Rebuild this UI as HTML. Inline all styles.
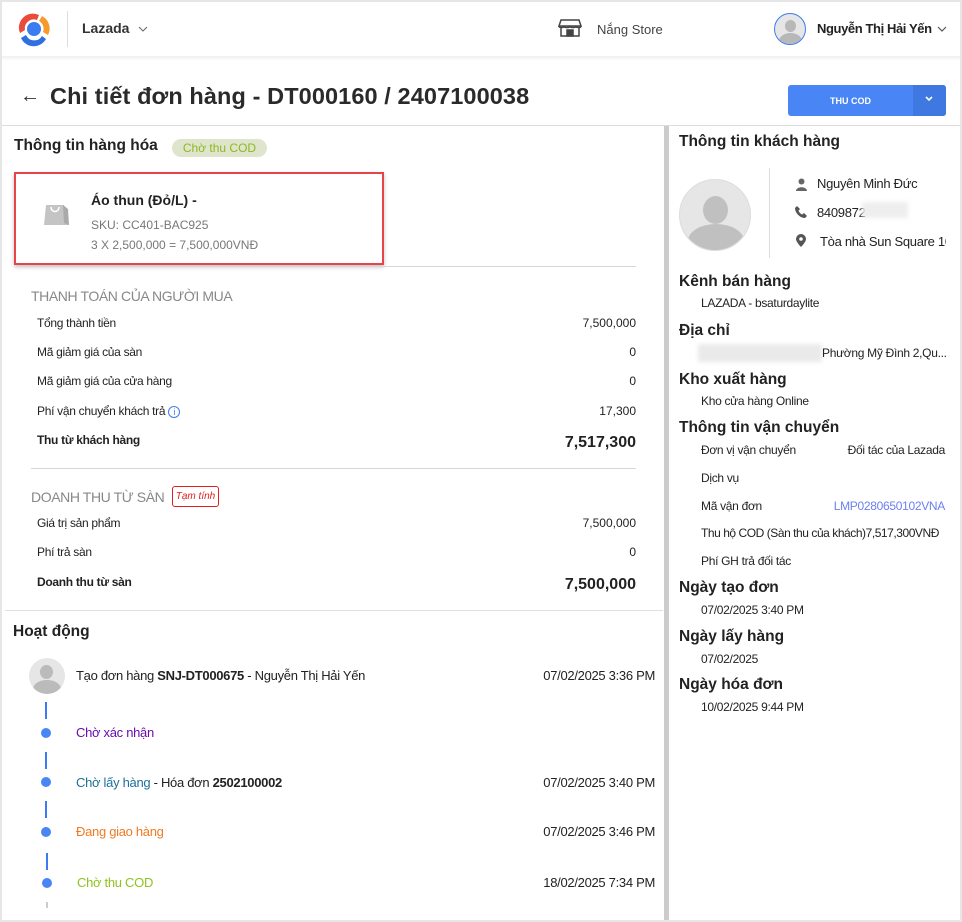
<!DOCTYPE html>
<html><head><meta charset="utf-8"><style>
*{margin:0;padding:0;box-sizing:border-box}
body{width:962px;height:922px;overflow:hidden;background:#fff;font-family:"Liberation Sans",sans-serif;color:#222;position:relative}
.a{position:absolute;white-space:nowrap}
.frame{position:absolute;left:0;top:0;width:962px;height:922px;border:2px solid #e6e6e6;pointer-events:none}
.s12{font-size:12px}
.h16{font-size:16px;font-weight:bold;color:#222}
.r{text-align:right}
.rc .s12{letter-spacing:-0.3px}
.tl{letter-spacing:-0.3px}
</style></head><body>
<!-- header -->
<div class="a" style="left:0;top:0;width:962px;height:56px;background:#fff;box-shadow:0 2px 4px rgba(0,0,0,.08)"></div>
<svg class="a" style="left:15px;top:11px" width="38" height="36" viewBox="0 0 38 36">
<circle cx="19" cy="18" r="7" fill="#3b7cf0"/>
<path d="M5 22 A14 14 0 0 1 24 4 L22 9 A9 9 0 0 0 10 19 Z" fill="#e94b3c"/>
<path d="M27 5 A14 14 0 0 1 33 24 L28 21 A9 9 0 0 0 24 10 Z" fill="#f59b2b"/>
<path d="M31 28 A14 14 0 0 1 6 27 L11 24 A9 9 0 0 0 27 25 Z" fill="#2f6fe0"/>
</svg>
<div class="a" style="left:67px;top:11px;width:1px;height:36px;background:#ddd"></div>
<div class="a" style="left:82px;top:20px;font-size:14px;font-weight:bold;color:#333">Lazada</div>
<svg class="a" style="left:138px;top:26px" width="10" height="6"><path d="M1 1l4 4 4-4" stroke="#666" stroke-width="1" fill="none"/></svg>
<svg class="a" style="left:558px;top:19px" width="24" height="18" viewBox="0 0 24 18" fill="none" stroke="#444" stroke-width="1.5"><path d="M3 1h18l2 6H1z"/><path d="M1 7c0 2 5 2 5 0 0 2 6 2 6 0 0 2 6 2 6 0 0 2 5 2 5 0M3 9v8h18V9"/><rect x="9" y="11" width="6" height="6" fill="#444"/></svg>
<div class="a" style="left:597px;top:22px;font-size:13px;color:#444">Nắng Store</div>
<div class="a" style="left:774px;top:13px;width:32px;height:32px;border-radius:50%;border:1px solid #3b7cf0;background:#e6e6e6;overflow:hidden"><div style="position:absolute;left:10px;top:6px;width:11px;height:12px;border-radius:50%;background:#b8b8b8"></div><div style="position:absolute;left:4px;top:19px;width:23px;height:16px;border-radius:50% 50% 0 0;background:#b8b8b8"></div></div>
<div class="a" style="left:817px;top:21px;font-size:13px;font-weight:bold;color:#222;letter-spacing:-0.4px">Nguyễn Thị Hải Yến</div>
<svg class="a" style="left:937px;top:26px" width="10" height="6"><path d="M1 1l4 4 4-4" stroke="#555" stroke-width="1.2" fill="none"/></svg>
<!-- title -->
<div class="a" style="left:20px;top:85px;font-size:20px;color:#333">←</div>
<div class="a" style="left:50px;top:83px;font-size:23.5px;font-weight:bold;color:#2a2a2a;letter-spacing:0.1px">Chi tiết đơn hàng - DT000160 / 2407100038</div>
<div class="a" style="left:788px;top:85px;width:158px;height:31px;background:#4a85f5;border-radius:3px"></div>
<div class="a" style="left:913px;top:85px;width:33px;height:31px;background:#3f78e0;border-radius:0 3px 3px 0"></div>
<div class="a" style="left:830px;top:96px;font-size:9px;font-weight:bold;color:#fff">THU COD</div>
<svg class="a" style="left:924px;top:95px" width="10" height="8"><path d="M2 2l3 3 3-3" stroke="#fff" stroke-width="1.6" fill="none"/></svg>
<div class="a" style="left:2px;top:125px;width:958px;height:1px;background:#ddd"></div>
<div class="a" style="left:664px;top:126px;width:5px;height:794px;background:#ccc"></div>
<!-- left -->
<div class="a h16" style="left:14px;top:137px;font-size:15.5px">Thông tin hàng hóa</div>
<div class="a" style="left:172px;top:139px;width:95px;height:18px;border-radius:9px;background:#dfe5cc;color:#8fb821;font-size:12px;text-align:center;line-height:18px">Chờ thu COD</div>
<div class="a" style="left:14px;top:172px;width:370px;height:93px;border:2px solid #e8434a;box-shadow:0 2px 4px rgba(0,0,0,.25);background:#fff"></div>
<svg class="a" style="left:43px;top:199px" width="28" height="30" viewBox="0 0 28 30"><path d="M3 6h18l5 20H1z" fill="#c4c4c4"/><path d="M8 8c0 6 8 6 8 0" stroke="#fff" stroke-width="1.5" fill="none"/><path d="M20 6l5 4 1 16-5-2z" fill="#aaa"/></svg>
<div class="a" style="left:91px;top:192px;font-size:14px;font-weight:bold;color:#222">Áo thun (Đỏ/L) -</div>
<div class="a" style="left:91px;top:218px;font-size:12px;color:#777">SKU: CC401-BAC925</div>
<div class="a" style="left:91px;top:238px;font-size:12px;color:#777">3 X 2,500,000 = 7,500,000VNĐ</div>
<div class="a" style="left:31px;top:266px;width:605px;height:1px;background:#d6d6d6"></div>
<div class="a" style="left:31px;top:288px;font-size:14px;color:#888;letter-spacing:-0.4px">THANH TOÁN CỦA NGƯỜI MUA</div>
<div class="a s12 tl" style="left:37px;top:316px">Tổng thành tiền</div><div class="a s12 r" style="right:326px;top:316px">7,500,000</div>
<div class="a s12 tl" style="left:37px;top:345px">Mã giảm giá của sàn</div><div class="a s12 r" style="right:326px;top:345px">0</div>
<div class="a s12 tl" style="left:37px;top:374px">Mã giảm giá của cửa hàng</div><div class="a s12 r" style="right:326px;top:374px">0</div>
<div class="a s12 tl" style="left:37px;top:404px">Phí vận chuyển khách trả <span style="display:inline-block;width:12px;height:12px;border:1px solid #3b7cf0;border-radius:50%;color:#3b7cf0;font-size:9px;text-align:center;line-height:10px;vertical-align:middle">i</span></div><div class="a s12 r" style="right:326px;top:404px">17,300</div>
<div class="a s12 tl" style="left:37px;top:433px;font-weight:bold">Thu từ khách hàng</div><div class="a r" style="right:326px;top:434px;font-size:16px;font-weight:bold">7,517,300</div>
<div class="a" style="left:31px;top:468px;width:605px;height:1px;background:#d6d6d6"></div>
<div class="a" style="left:31px;top:489px;font-size:14px;color:#888;letter-spacing:-0.4px">DOANH THU TỪ SÀN</div>
<div class="a" style="left:172px;top:486px;width:47px;height:21px;border:1px solid #e02020;border-radius:3px;color:#e02020;font-size:10px;font-style:italic;text-align:center;line-height:19px">Tạm tính</div>
<div class="a s12 tl" style="left:37px;top:516px">Giá trị sản phẩm</div><div class="a s12 r" style="right:326px;top:516px">7,500,000</div>
<div class="a s12 tl" style="left:37px;top:545px">Phí trả sàn</div><div class="a s12 r" style="right:326px;top:545px">0</div>
<div class="a s12 tl" style="left:37px;top:575px;font-weight:bold">Doanh thu từ sàn</div><div class="a r" style="right:326px;top:576px;font-size:16px;font-weight:bold">7,500,000</div>
<div class="a" style="left:5px;top:610px;width:658px;height:1px;background:#e0e0e0"></div>
<div class="a h16" style="left:13px;top:623px;font-size:15.5px">Hoạt động</div>
<div class="a" style="left:29px;top:658px;width:36px;height:36px;border-radius:50%;background:#e6e6e6;overflow:hidden"><div style="position:absolute;left:11px;top:7px;width:13px;height:14px;border-radius:50%;background:#bbb"></div><div style="position:absolute;left:4px;top:22px;width:28px;height:18px;border-radius:50% 50% 0 0;background:#bbb"></div></div>
<div class="a tl" style="left:76px;top:668px;font-size:13px">Tạo đơn hàng <b>SNJ-DT000675</b> - Nguyễn Thị Hải Yến</div>
<div class="a r tl" style="right:307px;top:668px;font-size:13px">07/02/2025 3:36 PM</div>
<div class="a" style="left:45px;top:702px;width:2px;height:17px;background:#3b7cf0"></div>
<div class="a" style="left:41px;top:728px;width:10px;height:10px;border-radius:50%;background:#4a85f5"></div>
<div class="a tl" style="left:76px;top:725px;font-size:13px;color:#6a0dad">Chờ xác nhận</div>
<div class="a" style="left:45px;top:752px;width:2px;height:17px;background:#3b7cf0"></div>
<div class="a" style="left:41px;top:777px;width:10px;height:10px;border-radius:50%;background:#4a85f5"></div>
<div class="a tl" style="left:76px;top:775px;font-size:13px"><span style="color:#1f6f9a">Chờ lấy hàng</span> - Hóa đơn <b>2502100002</b></div>
<div class="a r tl" style="right:307px;top:775px;font-size:13px">07/02/2025 3:40 PM</div>
<div class="a" style="left:45px;top:801px;width:2px;height:17px;background:#3b7cf0"></div>
<div class="a" style="left:41px;top:827px;width:10px;height:10px;border-radius:50%;background:#4a85f5"></div>
<div class="a tl" style="left:76px;top:824px;font-size:13px;color:#f07a22">Đang giao hàng</div>
<div class="a r tl" style="right:307px;top:824px;font-size:13px">07/02/2025 3:46 PM</div>
<div class="a" style="left:46px;top:853px;width:2px;height:17px;background:#3b7cf0"></div>
<div class="a" style="left:42px;top:878px;width:10px;height:10px;border-radius:50%;background:#4a85f5"></div>
<div class="a tl" style="left:77px;top:875px;font-size:13px;color:#8fc31f">Chờ thu COD</div>
<div class="a r tl" style="right:307px;top:875px;font-size:13px">18/02/2025 7:34 PM</div>
<div class="a" style="left:46px;top:902px;width:2px;height:6px;background:#ccc"></div>
<!-- right -->
<div class="rc">
<div class="a h16" style="left:679px;top:133px;font-size:15.5px">Thông tin khách hàng</div>
<div class="a" style="left:679px;top:179px;width:72px;height:72px;border-radius:50%;background:#e6e6e6;border:1px solid #ddd;overflow:hidden"><div style="position:absolute;left:23px;top:16px;width:25px;height:28px;border-radius:50%;background:#c0c0c0"></div><div style="position:absolute;left:8px;top:44px;width:56px;height:34px;border-radius:50% 50% 0 0;background:#c0c0c0"></div></div>
<div class="a" style="left:769px;top:168px;width:1px;height:90px;background:#ddd"></div>
<svg class="a" style="left:796px;top:178px" width="11" height="13"><circle cx="5.5" cy="3.5" r="3" fill="#666"/><path d="M0 13c0-5 11-5 11 0z" fill="#666"/></svg>
<div class="a s12" style="left:817px;top:176px;font-size:13px">Nguyên Minh Đức</div>
<svg class="a" style="left:795px;top:206px" width="12" height="12" viewBox="0 0 12 12"><path d="M2 0l3 3-1.5 1.8c1 2 2 3 3.7 3.7L9 7l3 3-2 2C5 12 0 7 0 2z" fill="#555"/></svg>
<div class="a s12" style="left:817px;top:205px;font-size:13px">8409872</div>
<div class="a" style="left:862px;top:202px;width:46px;height:16px;background:#eee;filter:blur(2px)"></div>
<svg class="a" style="left:796px;top:234px" width="10" height="13" viewBox="0 0 10 13"><path d="M5 0a5 5 0 0 1 5 5c0 3-5 8-5 8S0 8 0 5a5 5 0 0 1 5-5z" fill="#555"/><circle cx="5" cy="5" r="1.8" fill="#fff"/></svg>
<div class="a s12" style="left:820px;top:234px;font-size:13px;width:126px;overflow:hidden">Tòa nhà Sun Square 10</div>
<div class="a h16" style="left:679px;top:273px;font-size:15.5px">Kênh bán hàng</div>
<div class="a s12" style="left:701px;top:296px">LAZADA - bsaturdaylite</div>
<div class="a h16" style="left:679px;top:322px;font-size:15.5px">Địa chỉ</div>
<div class="a" style="left:698px;top:344px;width:124px;height:18px;background:#eaeaea;filter:blur(2px)"></div>
<div class="a s12" style="left:822px;top:346px">Phường Mỹ Đình 2,Qu...</div>
<div class="a h16" style="left:679px;top:371px;font-size:15.5px">Kho xuất hàng</div>
<div class="a s12" style="left:701px;top:394px">Kho cửa hàng Online</div>
<div class="a h16" style="left:679px;top:419px;font-size:15.5px">Thông tin vận chuyển</div>
<div class="a s12" style="left:701px;top:443px">Đơn vị vận chuyển</div><div class="a s12 r" style="right:17px;top:443px">Đối tác của Lazada</div>
<div class="a s12" style="left:701px;top:471px">Dịch vụ</div>
<div class="a s12" style="left:701px;top:499px">Mã vận đơn</div><div class="a s12 r" style="right:17px;top:499px;color:#6c7ff0">LMP0280650102VNA</div>
<div class="a s12" style="left:701px;top:526px;letter-spacing:-0.45px">Thu hộ COD (Sàn thu của khách)7,517,300VNĐ</div>
<div class="a s12" style="left:701px;top:554px">Phí GH trả đối tác</div>
<div class="a h16" style="left:679px;top:579px;font-size:15.5px">Ngày tạo đơn</div>
<div class="a s12" style="left:701px;top:603px">07/02/2025 3:40 PM</div>
<div class="a h16" style="left:679px;top:628px;font-size:15.5px">Ngày lấy hàng</div>
<div class="a s12" style="left:701px;top:652px">07/02/2025</div>
<div class="a h16" style="left:679px;top:676px;font-size:15.5px">Ngày hóa đơn</div>
<div class="a s12" style="left:701px;top:700px">10/02/2025 9:44 PM</div>
</div>
<div class="frame"></div>
</body></html>
